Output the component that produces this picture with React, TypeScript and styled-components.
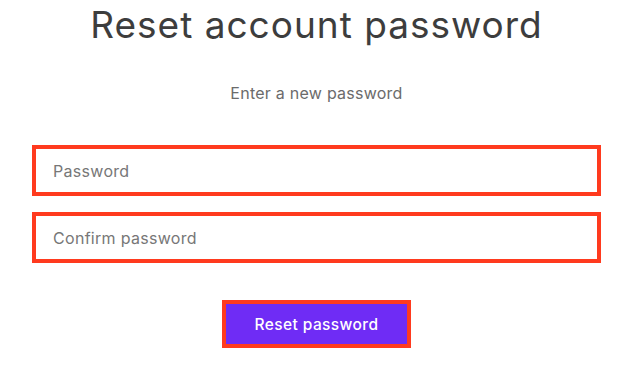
import React from "react";
import styled, { createGlobalStyle } from "styled-components";

const GlobalStyle = createGlobalStyle`
  body {
    margin: 0;
    background: #ffffff;
    font-family: Inter, "Liberation Sans", sans-serif;
  }
`;

const Page = styled.main`
  display: flex;
  flex-direction: column;
  align-items: center;
  padding: 3px 35px 0 32px;
`;

const Title = styled.h1`
  margin: 0;
  font-size: 37px;
  line-height: 44px;
  font-weight: 400;
  color: #3d3d3d;
  letter-spacing: 1px;
`;

const Subtitle = styled.p`
  margin: 36px 0 0;
  font-size: 16px;
  line-height: 20px;
  color: #6b6b6b;
  letter-spacing: 0.25px;
`;

const Form = styled.form`
  align-self: stretch;
  display: flex;
  flex-direction: column;
  gap: 16px;
  margin-top: 42px;
`;

const Input = styled.input`
  box-sizing: border-box;
  width: 100%;
  height: 51px;
  padding: 0 17px;
  border: 4px solid #ff3a1e;
  outline: none;
  font-family: inherit;
  font-size: 16px;
  letter-spacing: 0.3px;
  color: #333;
  background: #fff;
  &::placeholder {
    color: #777777;
  }
`;

const Actions = styled.div`
  display: flex;
  justify-content: center;
  margin-top: 21px;
`;

const Button = styled.button`
  box-sizing: border-box;
  width: 189px;
  height: 48px;
  border: 4px solid #ff3a1e;
  background: #6f2cf5;
  color: #ffffff;
  font-family: inherit;
  font-size: 15.5px;
  font-weight: 500;
  letter-spacing: 0.4px;
  cursor: pointer;
`;

export default function App() {
  return (
    <>
      <GlobalStyle />
      <Page>
        <Title>Reset account password</Title>
        <Subtitle>Enter a new password</Subtitle>
        <Form onSubmit={(e) => e.preventDefault()}>
          <Input type="password" placeholder="Password" />
          <Input type="password" placeholder="Confirm password" />
          <Actions>
            <Button type="submit">Reset password</Button>
          </Actions>
        </Form>
      </Page>
    </>
  );
}
